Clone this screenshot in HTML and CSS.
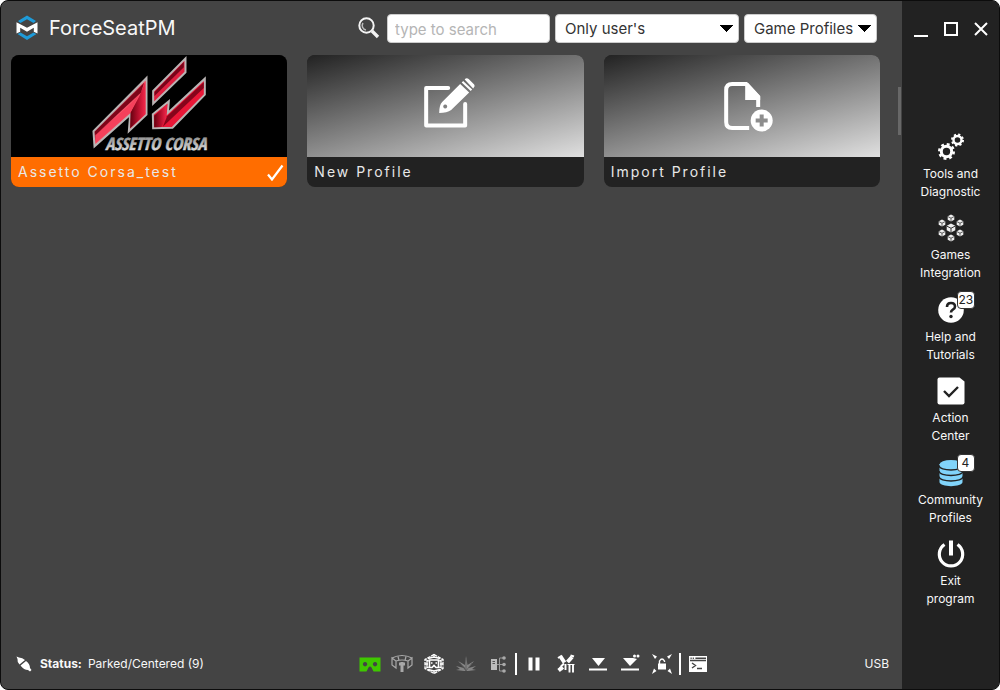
FILE: index.html
```html
<!DOCTYPE html>
<html lang="en">
<head>
<meta charset="utf-8">
<title>ForceSeatPM</title>
<link rel="stylesheet" href="styles.css">
</head>
<body>
<div class="window">
  <main class="main">
    <header class="header">
      <svg class="brand-logo" viewBox="0 0 22 26" aria-hidden="true">
        <path d="M2 6 11 .5 20 6l-2.500 2L11 4.200 4.500 8z" fill="#1e9bd9"/>
        <path d="M1.500 19 11 25l9.500-6-3-1.500L11 21.200 4.500 17.500z" fill="#1e9bd9"/>
        <path d="M.5 7.200 11 12.800 21.500 7.200v11.300l-3.700-1.700v-4L11 16.800l-6.800-4v4L.5 18.500z" fill="#fff"/>
      </svg>
      <h1 class="title">ForceSeatPM</h1>
      <div class="filters">
        <label class="search-label" for="search" aria-label="Search">
          <svg class="search-icon" viewBox="0 0 22 22"><circle cx="8.500" cy="8.500" r="7.200" fill="none" stroke="#f4f4f4" stroke-width="2"/><path d="M5 6a4.500 4.500 0 0 0 3 7" fill="none" stroke="#bbb" stroke-width="1.500"/><path d="m14 14 6 6" stroke="#f4f4f4" stroke-width="3.400"/></svg>
        </label>
        <input class="field search" id="search" type="text" placeholder="type to search">
        <select class="field owner" aria-label="Owner"><option>Only user's</option></select>
        <select class="field kind" aria-label="Profile type"><option>Game Profiles</option></select>
      </div>
    </header>

    <section class="cards">
      <button class="card selected">
        <span class="cover game">
          <svg class="cover-art" viewBox="0 0 276 102" aria-hidden="true">
            <defs>
              <linearGradient id="red" x1="0" y1="0" x2="1" y2="1"><stop offset="0" stop-color="#65000f"/><stop offset=".42" stop-color="#9c0d22"/><stop offset=".5" stop-color="#f8586c"/><stop offset="1" stop-color="#e80c28"/></linearGradient>
              <linearGradient id="fold" x1="0" y1="0" x2="1" y2="0"><stop offset="0" stop-color="#65000f"/><stop offset=".5" stop-color="#b30e2b"/><stop offset="1" stop-color="#f4284b"/></linearGradient>
              <linearGradient id="steel" x1="0" y1="0" x2="0" y2="1"><stop offset="0" stop-color="#777"/><stop offset="1" stop-color="#f4f4f4"/></linearGradient>
            </defs>
            <g transform="translate(74 -3) scale(.3333)" stroke="#b9b4b4" stroke-width="6">
              <path d="M25 238 184 78v110l-53 50 4-50-107 95z" fill="url(#red)"/>
              <path d="m136 182 28-52 17-44v100l-46 43z" fill="url(#fold)" stroke="none"/>
              <path d="m31 250 105-94 25-27-25 52L32 273z" fill="#f5405b" stroke="none"/>
              <path d="m29 239 148-147-10 30L31 248z" fill="#7d0519" stroke="none"/>
              <path d="M204 117 301 19v42l-97 94z" fill="#df2040"/>
              <path d="m208 120 88-90v16l-88 86z" fill="#78051a" stroke="none"/>
              <path d="m203 187 48-39-3 35L359 80v48L262 227l-58 2z" fill="#e91737"/>
              <path d="m207 191 38-32-3 41-13 25-22 1z" fill="url(#fold)" stroke="none"/>
              <path d="M246 193 356 91v17l-108 102-15 14z" fill="#86051b" stroke="none"/>
            </g>
            <text class="game-name" x="94" y="95" fill="url(#steel)" stroke="url(#steel)" stroke-width=".5">ASSETTO CORSA</text>
          </svg>
        </span>
        <span class="caption">Assetto Corsa_test
          <svg class="tick" viewBox="0 0 18 18" aria-hidden="true"><path d="m2 11.500 4 5L16.500 2.500" fill="none" stroke="#fff" stroke-width="2.200"/></svg>
        </span>
      </button>
      <button class="card">
        <span class="cover">
          <svg class="cover-art" viewBox="0 0 276 102" aria-hidden="true">
            <path d="M141 33h-22v37.500h39V49" fill="none" stroke="#fff" stroke-width="4" stroke-linecap="round" stroke-linejoin="round"/>
            <path fill-rule="evenodd" d="M132 58q0-8 3-11l18-18 9 8.500-18 17.500q-4 3-12 3zm6-8.500a2 2 0 1 0 .1 0zM154.500 27.500l1.500-1.500 9 8.500-1.500 1.500zM157.500 24.500l1-1q1.500-.8 3 .5l5.500 5.500q1 1.500 0 2.500l-1 1.500z" fill="#fff"/>
          </svg>
        </span>
        <span class="caption">New Profile</span>
      </button>
      <button class="card">
        <span class="cover">
          <svg class="cover-art" viewBox="0 0 276 102" aria-hidden="true">
            <path d="M145 73h-17q-6 0-6-6V35q0-6 6-6h14l12 13v10" fill="none" stroke="#fff" stroke-width="4"/>
            <path d="M141 28h3l12 13v4h-15z" fill="#fff"/>
            <circle cx="157.500" cy="65.500" r="11" fill="#fff"/>
            <path d="M157.500 59.500v12M151.500 65.500h12" stroke="#8d8d8d" stroke-width="4"/>
          </svg>
        </span>
        <span class="caption">Import Profile</span>
      </button>
    </section>

    <footer class="status">
      <div class="state">
        <svg class="plug" viewBox="0 0 16 16" aria-hidden="true"><path d="M.500.500 3 1.500q3.500 0 6 2.500l-5.500 4.500Q1 6 1.500 3zM10 5q4 3 4 7l1.500 2-1.500 1.500-2-1.500q-4 0-7.500-4.500z" fill="#fff"/></svg>
        <strong>Status:</strong><span>Parked/Centered (9)</span>
      </div>
      <div class="tools">
        <button class="tool" aria-label="VR headset"><svg viewBox="0 0 22 22"><path fill-rule="evenodd" d="M.5 4.500h21v14h-7l-2-4q-1.500-2-3 0l-2 4h-7zM6 9a2.200 2.200 0 1 0 .1 0zm10 0a2.200 2.200 0 1 0 .1 0z" fill="#3fc700"/></svg></button>
        <button class="tool" aria-label="Motion platform"><svg viewBox="0 0 22 22" fill="none" stroke="#a8a8a8" stroke-width="1.200"><path d="M1 5v7l4 3V8zM21 5v7l-4 3V8zM1 5q10-5 20 0M5 8q6-2 12 0M7 3.500l1 4m7-4-1 4"/><path d="M11 9v10M8 11h6" stroke-width="3"/></svg></button>
        <button class="tool" aria-label="Mesh view"><svg viewBox="0 0 22 22" fill="none" stroke="#fff" stroke-width="1.300"><path d="m11 1.500 9 5v9l-9 5-9-5v-9z" stroke-dasharray="3.500 .8"/><path d="M11 1.500v3m-9 2 4 1.500m14-1.500L16 8M2 15.500 6 14m14 1.500L16 14M11 20.500v-3M2 11h3m12 0h3M5 5.500l6-1.500 6 1.500M5 16.500l6 1.500 6-1.500M4 7.500v7m14-7v7"/><path d="M6.500 7h9v7.500h-2.500l-2-2-2 2H6.500z" stroke-width="1.600"/><path d="M8 10h1.500m3 0H14" stroke-width="1.600"/></svg></button>
        <button class="tool" aria-label="Leaf"><svg viewBox="0 0 22 22"><path d="m11 18-1-3-7-7 7 4 1-9 1.500 9L19 8l-5.500 7 7.500-2-4 3 4 1-8 1h-4L1 17l4-1-4-3 8 2z" fill="#858585"/><path d="m11 18V6M11 18 5 10m6 8 6-8" stroke="#555" stroke-width=".7"/></svg></button>
        <button class="tool" aria-label="Outputs"><svg viewBox="0 0 22 22"><path d="M4 6h6v11H4z" fill="#bbb"/><path d="M5.500 8.500H8m-2.500 2H8" stroke="#555"/><path d="M10 11.500h7M12.500 5v13M12.500 5H17m-4.500 13H17" fill="none" stroke="#999"/><circle cx="17" cy="5" r="1.800" fill="#aaa"/><circle cx="17" cy="11.500" r="1.800" fill="#aaa"/><circle cx="17" cy="18" r="1.800" fill="#aaa"/></svg></button>
        <span class="divider"></span>
        <button class="tool" aria-label="Pause"><svg viewBox="0 0 22 22"><path d="M5.500 4.500h4v13h-4zm7 0h4v13h-4z" fill="#fff"/></svg></button>
        <button class="tool" aria-label="Pause effects"><svg viewBox="0 0 22 22" stroke="#fff" fill="none"><path d="m5.500 3.500 4 6M17 4l-4.500 5" stroke-width="4"/><path d="m3 5 4-2.500M15.500 2.500 19 3.500M9 10.500l-3 3" stroke-width="2"/><path d="M3.500 15 6 18M5 13.500l3 3" stroke-width="3"/><path d="M10.500 11v6M14.500 11.500v8M18 11.500v8" stroke-width="1.900"/><path d="M12.500 11.500h7" stroke-width="1"/></svg></button>
        <button class="tool" aria-label="Park"><svg viewBox="0 0 22 22"><path d="M5 5h13l-6.500 8zM2 15.500h18v2H2z" fill="#fff"/></svg></button>
        <button class="tool" aria-label="Soft park"><svg viewBox="0 0 22 22"><path d="M4 5h10l4 1-7 7zM2 15.500h18v2H2z" fill="#fff"/><circle cx="15.500" cy="3" r="1.500" fill="#fff"/><circle cx="19" cy="3" r="1.500" fill="#fff"/></svg></button>
        <button class="tool" aria-label="Unlock"><svg viewBox="0 0 22 22"><path d="M7 10.500h8v6H7z" fill="#fff"/><path d="M8.500 11V8q2.500-4 5 0v1" fill="none" stroke="#fff" stroke-width="1.400"/><path d="m1 1 5 2.500L4 6zm20 0-5 2.500L18 6zM1 21l2-5.500L5.500 18zm20 0-2-5.500-2.500 2.500z" fill="#fff"/></svg></button>
        <span class="divider"></span>
        <button class="tool" aria-label="Console"><svg viewBox="0 0 22 22"><path d="M2 3h18v16H2z" fill="#fff"/><path d="M3 7.500h16M3.500 5.200h1.200m1 0h1.200m1.500 0H19M5 10l3.500 2.500L5 15m5 .5h5" fill="none" stroke="#444" stroke-width="1.400"/></svg></button>
      </div>
      <div class="connection">USB</div>
    </footer>
    <span class="scroll-thumb"></span>
  </main>

  <aside class="sidebar">
    <div class="window-controls">
      <button aria-label="Minimize"><svg viewBox="0 0 16 16"><path d="M1 15h14" stroke="#fff" stroke-width="2"/></svg></button>
      <button aria-label="Maximize"><svg viewBox="0 0 16 16"><path d="M2 2h12v12H2z" fill="none" stroke="#fff" stroke-width="2"/></svg></button>
      <button aria-label="Close"><svg viewBox="0 0 16 16"><path d="m2 2 12 12M14 2 2 14" stroke="#fff" stroke-width="2"/></svg></button>
    </div>
    <nav class="nav">
      <a class="nav-item" href="#tools"><span class="nav-icon"><svg viewBox="0 0 28 28" fill="none" stroke="#fff"><circle cx="9.500" cy="18.500" r="5.200" stroke-width="3"/><circle cx="9.500" cy="18.500" r="7.300" stroke-width="2.400" stroke-dasharray="2.870"/><circle cx="20.500" cy="7" r="4" stroke-width="2.400"/><circle cx="20.500" cy="7" r="5.500" stroke-width="2" stroke-dasharray="2.160"/></svg></span>Tools and<br>Diagnostic</a>
      <a class="nav-item" href="#games"><span class="nav-icon"><svg viewBox="0 0 28 28">
        <defs><g id="cube"><path d="m0-3.500 3.300 1.700v3.600L0 3.500l-3.300-1.700v-3.600z" fill="#eee"/><path d="m-3.300-1.500 3.300 1.700 3.300-1.700M0 .2v3.300" fill="none" stroke="#222" stroke-width=".7"/></g></defs>
        <use href="#cube" transform="translate(14 14) scale(1.300)"/><use href="#cube" x="14" y="4"/><use href="#cube" x="14" y="24"/><use href="#cube" x="5" y="9"/><use href="#cube" x="23" y="9"/><use href="#cube" x="5" y="19"/><use href="#cube" x="23" y="19"/></svg></span>Games<br>Integration</a>
      <a class="nav-item" href="#help"><span class="nav-icon"><svg viewBox="0 0 28 28"><circle cx="14" cy="14" r="12.800" fill="#fff"/><path d="M10 11q0-4 4-4t4 3.500q0 2-2.200 3.200-1.800 1-1.800 2.800" fill="none" stroke="#222" stroke-width="2.600"/><circle cx="14" cy="20.500" r="1.700" fill="#222"/></svg><span class="badge">23</span></span>Help and<br>Tutorials</a>
      <a class="nav-item" href="#action"><span class="nav-icon"><svg viewBox="0 0 28 28"><path d="M2.500.500h20l5 4v21q0 2-2 2h-23q-2 0-2-2v-23q0-2 2-2z" fill="#fff"/><path d="m7 14 5 5 9-9" fill="none" stroke="#222" stroke-width="2.400"/></svg></span>Action<br>Center</a>
      <a class="nav-item" href="#community"><span class="nav-icon"><svg viewBox="0 0 28 28"><path d="M2.500 5v18c0 5.500 23 5.500 23 0V5z" fill="#81d4fa"/><ellipse cx="14" cy="5.500" rx="11.500" ry="4.500" fill="#81d4fa"/><path d="M2 6.500c0 6 24 6 24 0M2 12c0 6 24 6 24 0M2 17.500c0 6 24 6 24 0" fill="none" stroke="#222" stroke-width="1.400"/></svg><span class="badge">4</span></span>Community<br>Profiles</a>
      <a class="nav-item" href="#exit"><span class="nav-icon"><svg viewBox="0 0 28 28"><path d="M7.500 4.500a11.700 11.700 0 1 0 13 0" fill="none" stroke="#fff" stroke-width="3.200"/><path d="M14 .5v15" stroke="#fff" stroke-width="4"/></svg></span>Exit<br>program</a>
    </nav>
  </aside>
</div>
</body>
</html>
```

FILE: styles.css
```css
* { box-sizing: border-box; }

body {
  margin: 0;
  background: #fff;
  color: #f8f8f8;
  font: 12px/18px Inter, "Liberation Sans", sans-serif;
  font-optical-sizing: none;
}

button {
  padding: 0;
  border: 0;
  background: none;
  color: inherit;
  font: inherit;
}

svg { display: block; }

.window {
  display: flex;
  min-height: 100vh;
  border: 1px solid #0c0c0c;
  border-radius: 8px;
  overflow: hidden;
  background: #444;
}

.main {
  position: relative;
  flex: 1;
  display: flex;
  flex-direction: column;
}

.header {
  display: flex;
  align-items: center;
  height: 54px;
  padding: 0 25px 0 15px;
}

.brand-logo { width: 22px; height: 26px; }

.title {
  margin: 0 0 0 11px;
  font-size: 20px;
  font-weight: 400;
  line-height: 24px;
}

.filters {
  display: flex;
  align-items: center;
  gap: 5px;
  margin-left: auto;
}

.search-label { margin-right: 2px; }
.search-icon { width: 22px; height: 22px; }

.field {
  height: 29px;
  padding: 2px 9px 0;
  border: 1px solid #ccc;
  border-radius: 4px;
  background: #fff;
  color: #333;
  font: 400 15px/20px Inter, "Liberation Sans", sans-serif;
}

.search { width: 163px; padding: 2px 7px 0; }
.search::placeholder { color: #b5b5b5; }

select.field {
  appearance: none;
  background: conic-gradient(from -43deg at 50% 100%, #000 86deg, transparent 0) no-repeat right 5px center / 13px 7px #fff;
}

.owner { width: 184px; }
.kind { width: 133px; }

.cards {
  display: grid;
  grid-template-columns: repeat(3, 1fr);
  gap: 20px;
  padding: 0 22px 0 10px;
}

.card {
  display: flex;
  flex-direction: column;
  overflow: hidden;
  border-radius: 8px;
  background: #222;
  text-align: left;
}

.cover {
  width: 100%;
  height: 102px;
  background: linear-gradient(165deg, #222 0%, #555 27%, #e0e0e0 100%);
}

.cover.game { background: #000; }
.cover-art { width: 100%; height: 102px; }

.game-name {
  font: italic bold 17px "Liberation Sans Narrow", "Open Sans Condensed", "Liberation Sans", sans-serif;
}

.caption {
  display: flex;
  align-items: center;
  justify-content: space-between;
  width: 100%;
  height: 30px;
  padding: 0 3px 0 7px;
  color: #e8e8e8;
  font-size: 14px;
  letter-spacing: 2px;
}

.selected .caption { background: #ff6d00; }
.tick { width: 18px; height: 18px; }

.status {
  display: grid;
  grid-template-columns: 19fr auto 10fr;
  align-items: center;
  height: 50px;
  margin-top: auto;
  padding: 0 13px 0 15px;
}

.state { display: flex; align-items: center; gap: 6px; }
.plug { width: 16px; height: 16px; margin-right: 2px; }
.connection { text-align: right; }

.tools { display: flex; align-items: center; gap: 10px; }
.tool svg { width: 22px; height: 22px; }

.divider {
  width: 2px;
  height: 22px;
  margin: 0 -4px;
  background: #fff;
}

.scroll-thumb {
  position: absolute;
  top: 86px;
  right: 1px;
  width: 3px;
  height: 48px;
  background: #686868;
}

.sidebar {
  display: flex;
  flex-direction: column;
  width: 97px;
  background: #222;
}

.window-controls {
  display: flex;
  justify-content: center;
  gap: 14px;
  padding-top: 20px;
}

.window-controls svg { width: 16px; height: 16px; }

.nav {
  flex: 1;
  display: flex;
  flex-direction: column;
  justify-content: space-between;
  padding: 96px 0 81px;
}

.nav-item {
  display: flex;
  flex-direction: column;
  align-items: center;
  color: #f8f8f8;
  text-align: center;
  text-decoration: none;
}

.nav-icon { position: relative; margin-bottom: 4px; }
.nav-icon svg { width: 28px; height: 28px; }

.badge {
  position: absolute;
  top: -5px;
  left: 20px;
  min-width: 18px;
  height: 18px;
  padding: 0 1px;
  border: 1px solid #333;
  border-radius: 4px;
  background: #fff;
  color: #222;
  font-size: 12px;
  line-height: 16px;
}
```
